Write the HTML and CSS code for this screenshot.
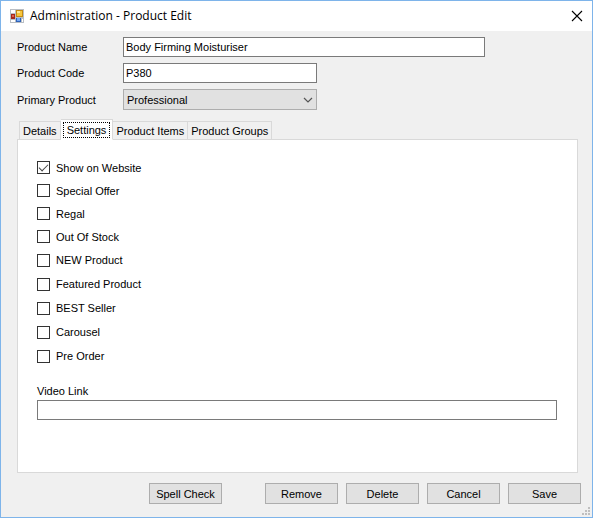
FILE: index.html
```html
<!DOCTYPE html>
<html lang="en">
<head>
<meta charset="utf-8">
<title>Administration - Product Edit</title>
<link rel="stylesheet" href="styles.css">
</head>
<body>
<div class="window">
  <header class="titlebar">
    <svg class="app-icon" width="14" height="14" viewBox="0 0 14 14" shape-rendering="crispEdges" aria-hidden="true">
      <path fill="#b9bec4" d="M0 0h14v14H0z"/>
      <path fill="#fff" d="M1 1h4v3H1zM1 11h4v2H1zM12 10h1v3h-1z"/>
      <path fill="#a5281c" d="M1 5h4v5H1z"/>
      <path fill="#e0604c" d="M2 6h2v2H2z"/>
      <path fill="#c48a12" d="M6 1h7v7H6z"/>
      <path fill="#f7c63c" d="M7 2h5v5H7z"/>
      <path fill="#fde793" d="M7 2h3v2H7z"/>
      <path fill="#2f62b8" d="M6 9h5v4H6z"/>
      <path fill="#75a9f5" d="M7 9h3v3H7z"/>
    </svg>
    <h1 class="title">Administration - Product Edit</h1>
    <button class="close" type="button" aria-label="Close">
      <svg width="12" height="12" viewBox="0 0 12 12" aria-hidden="true"><path d="M1 1l10 10M11 1L1 11" stroke="#000" stroke-width="1.1"/></svg>
    </button>
  </header>
  <form class="content">
    <div class="fields">
      <label for="name">Product Name</label>
      <input class="textbox textbox-wide" id="name" type="text" value="Body Firming Moisturiser">
      <label for="code">Product Code</label>
      <input class="textbox textbox-short" id="code" type="text" value="P380">
      <label for="primary">Primary Product</label>
      <span class="combo">
        <select id="primary"><option>Professional</option></select>
        <svg class="chevron" width="10" height="6" viewBox="0 0 10 6" aria-hidden="true"><path d="M1 1l4 4 4-4" fill="none" stroke="#555" stroke-width="1.2"/></svg>
      </span>
    </div>
    <div class="tabs" role="tablist">
      <button class="tab" type="button" role="tab" aria-selected="false">Details</button>
      <button class="tab tab-active" type="button" role="tab" aria-selected="true"><span class="focus">Settings</span></button>
      <button class="tab" type="button" role="tab" aria-selected="false">Product Items</button>
      <button class="tab" type="button" role="tab" aria-selected="false">Product Groups</button>
    </div>
    <section class="panel" role="tabpanel">
      <div class="checks">
        <label class="check"><input type="checkbox" checked>Show on Website</label>
        <label class="check"><input type="checkbox">Special Offer</label>
        <label class="check"><input type="checkbox">Regal</label>
        <label class="check"><input type="checkbox">Out Of Stock</label>
      </div>
      <div class="checks checks-loose">
        <label class="check"><input type="checkbox">NEW Product</label>
        <label class="check"><input type="checkbox">Featured Product</label>
        <label class="check"><input type="checkbox">BEST Seller</label>
        <label class="check"><input type="checkbox">Carousel</label>
        <label class="check"><input type="checkbox">Pre Order</label>
      </div>
      <label class="video-label" for="video">Video Link</label>
      <input class="textbox" id="video" type="text">
    </section>
    <footer class="actions">
      <button class="button button-apart" type="button">Spell Check</button>
      <button class="button" type="button">Remove</button>
      <button class="button" type="button">Delete</button>
      <button class="button" type="button">Cancel</button>
      <button class="button" type="button">Save</button>
    </footer>
  </form>
  <svg class="grip" width="8" height="8" viewBox="0 0 8 8" shape-rendering="crispEdges" aria-hidden="true"><path fill="#bfbfbf" d="M6 0h2v2H6zM3 3h2v2H3zM6 3h2v2H6zM0 6h2v2H0zM3 6h2v2H3zM6 6h2v2H6z"/></svg>
</div>
</body>
</html>
```
FILE: styles.css
```css
* { box-sizing: border-box; }

body {
  margin: 0;
  font: 11px/16px "Liberation Sans", Arial, sans-serif;
  color: #000;
}

button, input, select { font: inherit; color: inherit; }

.window {
  position: relative;
  display: flex;
  flex-direction: column;
  min-height: 100vh;
  border: 1px solid #7eb4ea;
  background: #f0f0f0;
}

.titlebar {
  display: flex;
  align-items: center;
  height: 30px;
  padding: 0 9px;
  background: #fff;
}

.title {
  flex: 1;
  margin: 0 0 0 6px;
  font: 12px/16px "Open Sans", "Noto Sans", sans-serif;
}

.close {
  display: flex;
  padding: 0;
  border: 0;
  background: none;
}

.content { padding: 6px 11px 0 16px; }

.fields {
  display: grid;
  grid-template-columns: 106px 1fr;
  row-gap: 6px;
  align-items: center;
}

.textbox {
  display: block;
  width: 100%;
  height: 20px;
  padding: 0 2px;
  border: 1px solid #7a7a7a;
  border-radius: 0;
  background: #fff;
  outline: 0;
}

.textbox-wide { max-width: 362px; }
.textbox-short { max-width: 194px; }

.combo {
  display: grid;
  align-items: center;
  max-width: 194px;
}

.combo select,
.chevron { grid-area: 1 / 1; }

.combo select {
  appearance: none;
  width: 100%;
  height: 21px;
  padding: 0 3px;
  border: 1px solid #adadad;
  border-radius: 0;
  background: #e1e1e1;
}

.chevron {
  justify-self: end;
  margin-right: 4px;
  pointer-events: none;
}

.tabs {
  display: flex;
  align-items: flex-end;
  height: 21px;
  margin: 9px 0 0 2px;
}

.tab {
  height: 19px;
  padding: 0 3px;
  border: 1px solid #d9d9d9;
  border-left-width: 0;
  background: #f0f0f0;
  white-space: nowrap;
}

.tab:first-child { border-left-width: 1px; }

.tab-active {
  z-index: 1;
  height: 21px;
  padding: 0 2px;
  border-bottom-color: #fff;
  background: #fff;
}

.focus {
  display: block;
  padding: 0 3px;
  line-height: 14px;
  border: 1px dotted #000;
}

.panel {
  min-height: 334px;
  margin: -1px 3px 0 0;
  padding: 16px 20px 16px 19px;
  border: 1px solid #d9d9d9;
  background: #fff;
}

.checks { display: grid; grid-auto-rows: 23px; }
.checks-loose { grid-auto-rows: 24px; }

.check {
  display: flex;
  align-items: center;
  gap: 6px;
  justify-self: start;
}

.check input {
  appearance: none;
  width: 13px;
  height: 13px;
  margin: 0;
  border: 1px solid #333;
  background: #fff;
}

.check input:checked::before {
  content: "";
  display: block;
  width: 8px;
  height: 4px;
  margin: 2px 1px;
  border: solid #444;
  border-width: 0 0 1px 1px;
  transform: rotate(-45deg);
}

.video-label {
  display: block;
  margin: 15px 0 1px;
}

.actions {
  display: flex;
  justify-content: flex-end;
  gap: 8px;
  margin-top: 10px;
}

.button {
  width: 73px;
  height: 21px;
  padding: 0;
  border: 1px solid #adadad;
  background: #e1e1e1;
}

.button-apart { margin-right: 35px; }

.grip {
  position: absolute;
  right: 2px;
  bottom: 2px;
}
```
